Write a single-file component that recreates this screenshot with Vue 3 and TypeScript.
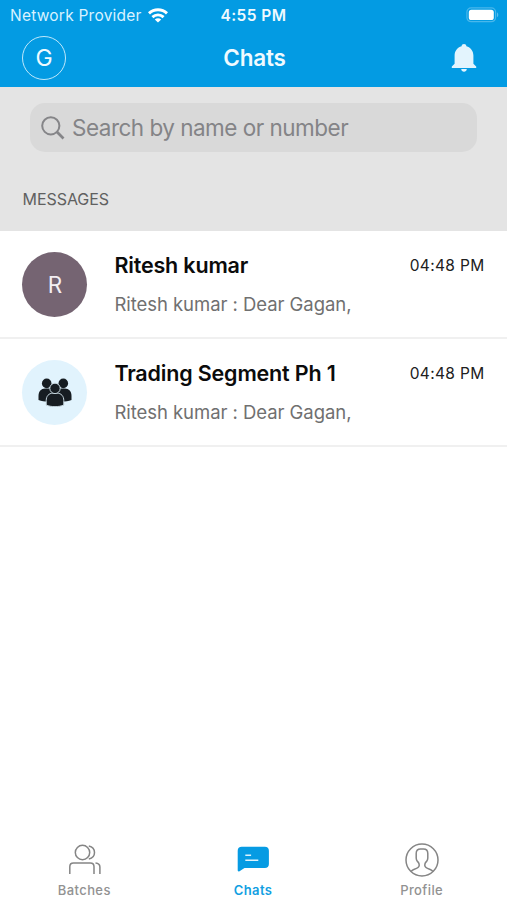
<script setup lang="ts">
interface Chat {
  id: number
  name: string
  preview: string
  time: string
  kind: 'person' | 'group'
}

interface Tab {
  id: 'batches' | 'chats' | 'profile'
  label: string
}

const chats: Chat[] = [
  { id: 1, name: 'Ritesh kumar', preview: 'Ritesh kumar : Dear Gagan,', time: '04:48 PM', kind: 'person' },
  { id: 2, name: 'Trading Segment Ph 1', preview: 'Ritesh kumar : Dear Gagan,', time: '04:48 PM', kind: 'group' },
]

const tabs: Tab[] = [
  { id: 'batches', label: 'Batches' },
  { id: 'chats', label: 'Chats' },
  { id: 'profile', label: 'Profile' },
]

const activeTab: Tab['id'] = 'chats'
</script>

<template>
  <div class="screen">
    <header class="header">
      <div class="status">
        <div class="carrier">
          <span class="carrier-name">Network Provider</span>
          <svg class="wifi" width="20" height="15" viewBox="0 0 20 15" fill="none" stroke="#fff" stroke-width="2.9">
            <path d="M1 5.4C6 .6 14 .6 19 5.4" />
            <path d="M4.4 9.1c3.2-3 8-3 11.2 0" />
            <path d="M10 14.6l-3.2-3.2c1.8-1.6 4.6-1.6 6.4 0z" fill="#fff" stroke="none" />
          </svg>
        </div>
        <span class="clock">4:55 PM</span>
        <svg class="battery" width="33" height="16" viewBox="0 0 33 16">
          <rect x=".9" y=".9" width="28.7" height="13.8" rx="4.2" fill="none" stroke="#fff" stroke-opacity=".28" stroke-width="1.2" />
          <rect x="2.8" y="2.8" width="25" height="10.2" rx="2.6" fill="#fff" />
          <path d="M31 5.5c1.7.6 1.7 4 0 4.6z" fill="#fff" fill-opacity=".35" />
        </svg>
      </div>
      <div class="navbar">
        <div class="me"><span>G</span></div>
        <h1 class="title">Chats</h1>
        <svg class="bell" width="26" height="30" viewBox="0 0 26 30" fill="#e3f4fd">
          <path d="M13 1c1.400 0 2.300.9 2.400 2.200 4.300 1.200 7 4.800 7 9.300v8.200l2.800 2.900v1.300H.8v-1.300l2.800-2.900v-8.200c0-4.500 2.700-8.100 7-9.300C10.700 1.900 11.600 1 13 1z" />
          <path d="M10.200 26h5.600c-.2 1.800-1.300 2.800-2.800 2.800s-2.600-1-2.800-2.800z" />
        </svg>
      </div>
    </header>

    <section class="filter">
      <div class="search">
        <svg width="24" height="24" viewBox="0 0 24 24" fill="none" stroke="#858588" stroke-width="2">
          <circle cx="9.800" cy="9.800" r="8.600" />
          <path d="M15.800 15.800l6.700 6.700" stroke-width="2.700" />
        </svg>
        <span class="placeholder">Search by name or number</span>
      </div>
      <h2 class="section-title">MESSAGES</h2>
    </section>

    <main class="list">
      <article v-for="chat in chats" :key="chat.id" class="row">
        <div class="avatar" :class="chat.kind">
          <span v-if="chat.kind === 'person'">{{ chat.name.charAt(0) }}</span>
          <svg v-else width="34" height="29" viewBox="0 0 34 29" fill="#171d22">
            <circle cx="8.700" cy="5.400" r="4.800" />
            <circle cx="25.300" cy="5.400" r="4.800" />
            <path d="M.5 22v-4.200c0-4.300 2.700-7.300 6.500-7.300h4c3.500 0 5.500 3 5.500 6v6.500c-5 1-11 1-16-1z" />
            <path d="M33.500 22v-4.200c0-4.300-2.700-7.300-6.500-7.300h-4c-3.500 0-5.500 3-5.500 6v6.500c5 1 11 1 16-1z" />
            <g stroke="#c5d5dd" stroke-width="1">
              <path d="M8.200 27v-4.400c0-4.400 2.600-7.400 6.500-7.400h4.600c3.900 0 6.500 3 6.500 7.400V27c-4.800 2.200-12.800 2.200-17.600 0z" />
              <circle cx="17" cy="10.400" r="5.200" />
            </g>
          </svg>
        </div>
        <div class="body">
          <div class="top">
            <h3 class="name">{{ chat.name }}</h3>
            <time class="time">{{ chat.time }}</time>
          </div>
          <p class="preview">{{ chat.preview }}</p>
        </div>
      </article>
    </main>

    <nav class="tabs">
      <a v-for="tab in tabs" :key="tab.id" class="tab" :class="{ active: tab.id === activeTab }">
        <svg v-if="tab.id === 'batches'" width="34" height="34" viewBox="0 0 34 34" fill="none" stroke="#858585" stroke-width="1.500">
          <circle cx="15.500" cy="9.500" r="7.200" />
          <path d="M21.800 2.900c7.600 1.700 7.600 11.500 0 13.200" />
          <path d="M2.800 31v-7.300c0-2.500 1.200-3.700 3.700-3.700h16.800c2.500 0 3.700 1.200 3.700 3.700V31" />
          <path d="M28.500 20c3.200.3 4.400 1.500 4.400 4V31" />
        </svg>
        <svg v-else-if="tab.id === 'chats'" width="34" height="34" viewBox="0 0 34 34">
          <path d="M5.700 3.700h23.200c2.500 0 4 1.500 4 4v13.200c0 2.500-1.500 4-4 4H8.500l-5 3.300c-1 .6-1.800.2-1.800-.9V7.700c0-2.500 1.500-4 4-4z" fill="#069be3" />
          <path d="M9.300 12.300h5.800M9.300 17.300h13" stroke="#dff3fd" stroke-width="1.600" />
        </svg>
        <svg v-else width="34" height="34" viewBox="0 0 34 34" fill="none" stroke="#858585" stroke-width="1.500">
          <circle cx="17" cy="17" r="16" />
          <path d="M6 28.500c.8-1 1.500-1.500 2.800-2l2.700-1.100c2.400-1 3.200-2.400 2.500-4.600-.3-1-.8-1.600-1.600-2.400-.9-1-1.200-2-1.200-3.400V10.500c0-2.900 1.600-4.400 4.300-4.400h3c2.700 0 4.300 1.500 4.300 4.400V15c0 1.400-.3 2.400-1.200 3.400-.8.8-1.300 1.400-1.600 2.400-.7 2.200.1 3.600 2.500 4.600l2.700 1.100c1.300.5 2 1 2.800 2" />
        </svg>
        <span class="tab-label">{{ tab.label }}</span>
      </a>
    </nav>
  </div>
</template>

<style>
body {
  margin: 0;
  background: #fff;
}
</style>

<style scoped>
.screen {
  display: flex;
  flex-direction: column;
  width: 100%;
  height: 900px;
  overflow: hidden;
  background: #fff;
  font-family: Inter, "Liberation Sans", sans-serif;
  color: #0b0b0b;
  white-space: nowrap;
}

h1,
h2,
h3,
p {
  margin: 0;
}

.header {
  box-sizing: border-box;
  height: 87px;
  background: #039be3;
  color: #effaff;
}

.status {
  display: grid;
  grid-template-columns: 1fr auto 1fr;
  align-items: center;
  height: 30px;
  padding: 0 8px 0 10px;
}

.carrier {
  display: flex;
  align-items: center;
  gap: 6px;
}

.carrier-name {
  font-size: 15.500px;
  letter-spacing: 0.230px;
  color: #d8f2ff;
}

.clock {
  padding-right: 2px;
  font-size: 15.500px;
  font-weight: 600;
  letter-spacing: 0.450px;
}

.battery {
  justify-self: end;
}

.navbar {
  display: grid;
  grid-template-columns: 1fr auto 1fr;
  align-items: center;
  height: 56px;
  padding: 0 22px 0 24px;
}

.me {
  box-sizing: border-box;
  display: flex;
  align-items: center;
  justify-content: center;
  width: 44px;
  height: 44px;
  margin-left: -2px;
  border: 1.500px solid #bfe8fb;
  border-radius: 50%;
  font-size: 23px;
}

.title {
  font-size: 22.500px;
  font-weight: 600;
  line-height: 28px;
  letter-spacing: -0.200px;
}

.bell {
  justify-self: end;
  margin-right: 8px;
}

.filter {
  box-sizing: border-box;
  height: 144px;
  padding: 16px 30px 0;
  background: #e4e4e4;
}

.search {
  box-sizing: border-box;
  display: flex;
  align-items: center;
  gap: 7px;
  height: 49px;
  padding-left: 11px;
  border-radius: 15px;
  background: #d9d9d9;
}

.placeholder {
  font-size: 22.500px;
  letter-spacing: -0.510px;
  color: #848487;
}

.section-title {
  margin: 37px 0 0 -7.500px;
  font-size: 16px;
  font-weight: 400;
  line-height: 20px;
  letter-spacing: -0.050px;
  color: #606060;
}

.list {
  flex: 1;
}

.row {
  box-sizing: border-box;
  display: flex;
  gap: 27px;
  height: 108px;
  padding: 21px 22.500px 0 22.400px;
  border-bottom: 2px solid #f0f0f0;
}

.avatar {
  display: flex;
  flex: none;
  align-items: center;
  justify-content: center;
  width: 65px;
  height: 65px;
  border-radius: 50%;
}

.avatar.person {
  background: #756472;
  color: #f3eef2;
  font-size: 22.500px;
}

.avatar.group {
  background: #e1f3fd;
}

.body {
  flex: 1;
}

.top {
  display: flex;
  align-items: center;
  justify-content: space-between;
  height: 26px;
}

.name {
  font-size: 21.500px;
  font-weight: 600;
  line-height: 26px;
  letter-spacing: -0.170px;
}

.time {
  font-size: 15.500px;
  letter-spacing: 0.330px;
  color: #202020;
}

.preview {
  margin-top: 13.500px;
  font-size: 18.500px;
  line-height: 24px;
  letter-spacing: -0.050px;
  color: #707070;
}

.tabs {
  display: grid;
  grid-template-columns: repeat(3, 1fr);
  height: 57px;
  margin-right: 1px;
}

.tab {
  display: flex;
  flex-direction: column;
  align-items: center;
  gap: 5px;
  color: #929292;
}

.tab.active {
  color: #129fe2;
}

.tab-label {
  font-size: 13px;
  font-weight: 500;
  line-height: 16px;
  letter-spacing: 0.400px;
}

.tab.active .tab-label {
  font-weight: 600;
}
</style>
